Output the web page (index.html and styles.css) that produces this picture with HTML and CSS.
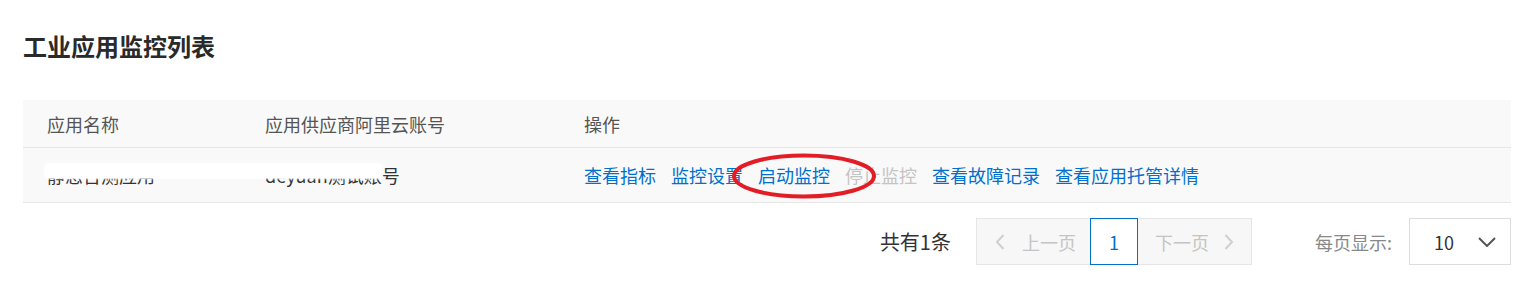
FILE: index.html
```html
<!DOCTYPE html>
<html lang="zh-CN">
<head>
<meta charset="utf-8">
<title>工业应用监控列表</title>
<link rel="stylesheet" href="styles.css">
</head>
<body>
<div class="page">
  <h1 class="title">工业应用监控列表</h1>
  <div class="table">
    <div class="row head">
      <div class="c1">应用名称</div>
      <div class="c2">应用供应商阿里云账号</div>
      <div class="c3">操作</div>
    </div>
    <div class="row body">
      <div class="c1">静态台测应用</div>
      <div class="c2">deyuan测试账号</div>
      <div class="c3 actions">
        <a class="link">查看指标</a>
        <a class="link">监控设置</a>
        <a class="link">启动监控</a>
        <a class="link disabled">停止监控</a>
        <a class="link">查看故障记录</a>
        <a class="link">查看应用托管详情</a>
      </div>
      <div class="redact"></div>
      <svg class="circle" width="150" height="50" viewBox="0 0 150 50"><ellipse cx="75" cy="25" rx="70" ry="20.5" fill="none" stroke="#e31d26" stroke-width="4"/></svg>
    </div>
  </div>
  <div class="pager">
    <span class="total">共有1条</span>
    <div class="pages">
      <span class="pbtn prev"><svg width="10" height="16" viewBox="0 0 10 16"><path d="M8.5 1 L2 8 L8.5 15" fill="none" stroke="#cfcfcf" stroke-width="2"/></svg><span>上一页</span></span>
      <span class="pnum">1</span>
      <span class="pbtn next"><span>下一页</span><svg width="10" height="16" viewBox="0 0 10 16"><path d="M1.5 1 L8 8 L1.5 15" fill="none" stroke="#cfcfcf" stroke-width="2"/></svg></span>
    </div>
    <span class="size-label">每页显示:</span>
    <div class="select"><span>10</span><svg width="18" height="10" viewBox="0 0 18 10"><path d="M1 1 L9 9 L17 1" fill="none" stroke="#555" stroke-width="2"/></svg></div>
  </div>
</div>
</body>
</html>
```

FILE: styles.css
```css
html, body {
  margin: 0;
  padding: 0;
  background: #fff;
}
body {
  font-family: "Noto Sans CJK SC", "Liberation Sans", sans-serif;
  color: #333;
}
.page {
  padding: 34px 8px 0 23px;
}
.title {
  margin: 0;
  font-size: 24px;
  line-height: 24px;
  font-weight: bold;
  color: #2a2a2a;
}
.table {
  margin-top: 42px;
}
.row {
  display: flex;
  align-items: center;
  background: #f9f9f9;
  border-bottom: 1px solid #e6e6e6;
  font-size: 18px;
  line-height: 20px;
  position: relative;
}
.row.head {
  height: 47px;
  color: #555;
}
.row.body {
  height: 54px;
  color: #333;
}
.c1 {
  width: 242px;
  padding-left: 24px;
  box-sizing: border-box;
  flex: none;
}
.c2 {
  width: 319px;
  flex: none;
}
.c3 {
  flex: 1;
}
.actions {
  display: flex;
  gap: 15px;
}
.link {
  color: #0070cc;
  cursor: pointer;
}
.link.disabled {
  color: #c4c4c4;
}
.redact {
  position: absolute;
  left: 22px;
  top: 16px;
  width: 337px;
  height: 14px;
  background: #fff;
  border-radius: 4px;
  box-shadow: 0 0 2px 1px #fff;
}
.circle {
  position: absolute;
  left: 706px;
  top: 3px;
}
.pager {
  display: flex;
  align-items: center;
  justify-content: flex-end;
  margin-top: 15px;
  font-size: 18px;
  line-height: 20px;
}
.total {
  color: #333;
  font-size: 20px;
  margin-right: 25px;
}
.pages {
  display: flex;
  height: 47px;
}
.pbtn {
  display: flex;
  align-items: center;
  box-sizing: border-box;
  height: 47px;
  width: 115px;
  background: #f7f7f7;
  border: 1px solid #e6e6e6;
  color: #c4c4c4;
}
.prev {
  padding-left: 18px;
  gap: 17px;
}
.next {
  padding-left: 17px;
  gap: 15px;
  margin-left: -1px;
}
.pnum {
  display: flex;
  align-items: center;
  justify-content: center;
  box-sizing: border-box;
  width: 48px;
  height: 47px;
  border: 1px solid #0070cc;
  background: #fff;
  color: #0070cc;
  margin-left: -1px;
  position: relative;
}
.size-label {
  color: #888;
  margin-left: 63px;
  margin-right: 17px;
}
.select {
  display: flex;
  align-items: center;
  justify-content: space-between;
  box-sizing: border-box;
  width: 102px;
  height: 47px;
  border: 1px solid #ddd;
  background: #fff;
  padding: 0 14px 0 24px;
  color: #333;
}
```
